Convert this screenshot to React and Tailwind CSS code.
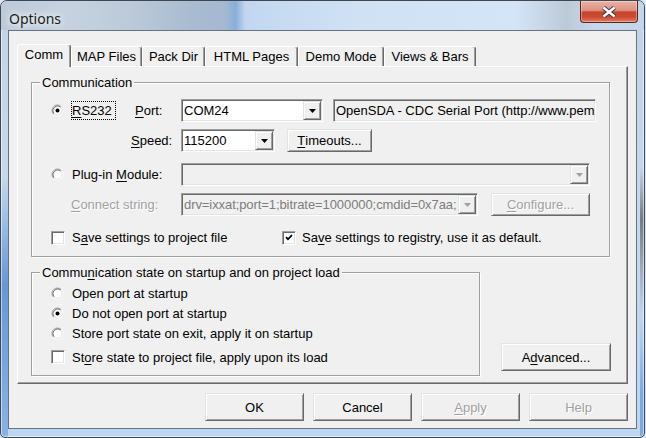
import React from "react";

const raised =
  "border border-t-[#e3e3e3] border-l-[#e3e3e3] border-r-[#696969] border-b-[#696969] shadow-[inset_1px_1px_0_#fff,inset_-1px_-1px_0_#a0a0a0] bg-[#f0f0f0]";
const sunken =
  "border border-t-[#a0a0a0] border-l-[#a0a0a0] border-r-white border-b-white shadow-[inset_1px_1px_0_#696969,inset_-1px_-1px_0_#e3e3e3]";
const grayText = "text-[#a0a0a0] [text-shadow:1px_1px_0_#fff]";

const U = ({ children }) => (
  <span className="underline underline-offset-[2px]">{children}</span>
);

const Button = ({ className, disabled, children }) => (
  <div
    className={`${raised} ${className} flex items-center justify-center ${
      disabled ? grayText : "text-black"
    }`}
  >
    {children}
  </div>
);

const Combo = ({ className, value, disabled }) => (
  <div
    className={`${sunken} ${className} h-[23px] p-[1px] flex ${
      disabled ? "bg-[#f0f0f0]" : "bg-white"
    }`}
  >
    <div
      className={`flex-1 min-w-0 overflow-hidden whitespace-nowrap pl-[1px] flex items-center ${
        disabled ? "text-[#7d7d7d] tracking-[-0.08px]" : "text-black"
      }`}
    >
      {value}
    </div>
    <div className={`${raised} w-[18px] h-full flex items-center justify-center`}>
      <svg width="7" height="4" viewBox="0 0 7 4">
        <path d="M0 0h7L3.5 4z" fill={disabled ? "#a0a0a0" : "#000"} />
      </svg>
    </div>
  </div>
);

const Radio = ({ checked }) => (
  <svg width="13" height="13" viewBox="0 0 13 13" className="shrink-0">
    <circle cx="6.5" cy="6.5" r="5" fill="#fff" />
    <path d="M2.61 10.39A5.5 5.5 0 0 1 10.39 2.61" fill="none" stroke="#a0a0a0" />
    <path d="M3.32 9.68A4.5 4.5 0 0 1 9.68 3.32" fill="none" stroke="#696969" />
    <path d="M10.39 2.61A5.5 5.5 0 0 1 2.61 10.39" fill="none" stroke="#fff" />
    <path d="M9.68 3.32A4.5 4.5 0 0 1 3.32 9.68" fill="none" stroke="#e3e3e3" />
    {checked && <circle cx="6.5" cy="6.5" r="2" fill="#000" />}
  </svg>
);

const Check = ({ checked }) => (
  <div className="w-[14px] h-[14px] shrink-0 bg-white border border-t-[#a0a0a0] border-l-[#a0a0a0] border-r-white border-b-white shadow-[inset_1px_1px_0_#696969,inset_-1px_-1px_0_#e3e3e3] flex items-center justify-center">
    {checked && (
      <svg width="8" height="7" viewBox="0 0 8 7">
        <path d="M1 3.2 L3 5.2 L7 1.2" stroke="#000" strokeWidth="1.7" fill="none" />
      </svg>
    )}
  </div>
);

const Tab = ({ label, className, active }) => (
  <div
    className={`${className} text-center pt-[2px] rounded-t-[3px] border-l border-t border-r border-l-white border-t-white border-r-[#696969] shadow-[inset_-1px_0_0_#a0a0a0] ${
      active ? "relative z-10 h-[23px] -mb-[1px] bg-[#f0f0f0]" : "h-[20px]"
    }`}
  >
    {label}
  </div>
);

const Legend = ({ children }) => (
  <div className="-mt-[8px] ml-[8px] w-fit px-[2px] bg-[#f0f0f0] leading-[15px]">
    {children}
  </div>
);

const group =
  "border border-[#a0a0a0] shadow-[1px_1px_0_#fff,inset_1px_1px_0_#fff]";

export default function App() {
  return (
    <div className="w-[646px] h-[438px] overflow-hidden bg-[#dce7f3] font-['Liberation_Sans',Arial,sans-serif] text-[13px] leading-[15px] text-black">
      <div className="w-[645px] h-[438px] flex flex-col overflow-hidden rounded-t-[7px] rounded-b-[5px] border border-[#3f4852] shadow-[inset_0_0_0_1px_rgba(255,255,255,0.55)] [background:linear-gradient(180deg,rgba(70,130,210,0)_40%,rgba(70,130,210,0.75)_65%,rgba(100,155,220,0.6)_100%)_left_top/7px_100%_no-repeat,linear-gradient(180deg,rgba(60,60,60,0)_38%,rgba(60,60,60,0.6)_50%,rgba(60,60,60,0)_72%,rgba(80,140,215,0.6)_90%)_right_top/4px_100%_no-repeat,linear-gradient(180deg,#c3d3e6_0%,#c7d9ee_50%,#bdd6f2_100%)]">
        {/* title bar */}
        <div className="h-[29px] shrink-0 flex items-start justify-between bg-[linear-gradient(90deg,#bccad9_0%,#c6d2df_10%,#bccad9_20%,#a9bbd0_30%,#a4b8d0_35%,#88aedb_36.5%,#c2d7ef_38%,#d0e1f4_55%,#d4e5f7_80%,#bdc9d7_88%,#c6d7ea_92%,#c4d6ea_100%)]">
          <div className="pl-[8px] pt-[8px] font-['Noto_Sans',sans-serif] text-[14px] leading-[20px] text-[#1b1b1b] [text-shadow:0_0_6px_#fff,0_0_10px_#fff]">
            Options
          </div>
          <div className="mr-[6px] w-[58px] h-[22px] rounded-b-[4px] border border-t-0 border-[#5a241b] bg-[linear-gradient(180deg,#e9b3a5_0%,#dc9180_45%,#c8452c_52%,#c94a31_75%,#e27c5f_100%)] shadow-[inset_0_0_0_1px_rgba(255,255,255,0.35)] flex items-center justify-center">
            <svg width="16" height="12" viewBox="0 0 16 12">
              <path d="M2.5 1.5 L13.5 10.5 M13.5 1.5 L2.5 10.5" stroke="#3c3c3c" strokeWidth="4.4" />
              <path d="M2.5 1.5 L13.5 10.5 M13.5 1.5 L2.5 10.5" stroke="#fff" strokeWidth="2.4" />
            </svg>
          </div>
        </div>

        {/* client area */}
        <div className="mx-[7px] h-[399px] shrink-0 border border-[#66727f] bg-[#f0f0f0] flex flex-col pl-[8px] pt-[13px]">
          <div className="flex items-end h-[22px]">
            <Tab label="Comm" className="w-[54px]" active />
            <Tab label="MAP Files" className="w-[71px]" />
            <Tab label="Pack Dir" className="w-[63px]" />
            <Tab label="HTML Pages" className="w-[93px]" />
            <Tab label="Demo Mode" className="w-[86px]" />
            <Tab label="Views & Bars" className="w-[92px]" />
          </div>

          <div className="w-[611px] h-[318px] bg-[#f0f0f0] border border-t-white border-l-white border-r-[#696969] border-b-[#696969] shadow-[inset_-1px_-1px_0_#a0a0a0]">
            {/* Communication */}
            <div className={`${group} ml-[13px] mt-[15px] w-[579px] h-[175px]`}>
              <Legend>Communication</Legend>

              <div className="flex items-center h-[23px] mt-[9px] pl-[19px]">
                <Radio checked />
                <div className="ml-[7px] w-[45px] h-[19px] border border-dotted border-black flex items-center">
                  <U>R</U>S232
                </div>
                <div className="ml-[19px] w-[46px]">
                  <U>P</U>ort:
                </div>
                <Combo className="w-[142px]" value="COM24" />
                <div className={`${sunken} ml-[10px] w-[263px] h-[23px] p-[1px] bg-[#f0f0f0] flex items-center overflow-hidden`}>
                  <div className="pl-[1px] whitespace-nowrap">
                    OpenSDA - CDC Serial Port (http://www.pemicro.com)
                  </div>
                </div>
              </div>

              <div className="flex items-center h-[23px] mt-[7px] pl-[99px]">
                <div className="w-[50px]">
                  <U>S</U>peed:
                </div>
                <Combo className="w-[94px]" value="115200" />
                <Button className="ml-[12px] w-[85px] h-[23px]">
                  <U>T</U>imeouts...
                </Button>
              </div>

              <div className="flex items-center h-[23px] mt-[11px] pl-[19px]">
                <Radio />
                <div className="ml-[8px] w-[109px]">
                  Plug-in <U>M</U>odule:
                </div>
                <Combo className="w-[409px]" value="" disabled />
              </div>

              <div className="flex items-center h-[23px] mt-[7px] pl-[39px]">
                <div className={`w-[110px] ${grayText}`}>
                  <U>C</U>onnect string:
                </div>
                <Combo
                  className="w-[297px]"
                  value="drv=ixxat;port=1;bitrate=1000000;cmdid=0x7aa;"
                  disabled
                />
                <Button className="ml-[13px] w-[99px] h-[23px]" disabled>
                  <U>C</U>onfigure...
                </Button>
              </div>

              <div className="flex items-center h-[15px] mt-[14px] pl-[19px]">
                <div className="w-[231px] flex items-center">
                  <Check />
                  <div className="ml-[7px]">
                    S<U>a</U>ve settings to project file
                  </div>
                </div>
                <Check checked />
                <div className="ml-[6px]">
                  Sa<U>v</U>e settings to registry, use it as default.
                </div>
              </div>
            </div>

            {/* startup state */}
            <div className="flex items-end ml-[13px] mt-[15px]">
              <div className={`${group} w-[449px] h-[104px]`}>
                <Legend>
                  Commu<U>n</U>ication state on startup and on project load
                </Legend>
                <div className="flex items-center h-[20px] mt-[3px] pl-[19px]">
                  <Radio />
                  <div className="ml-[8px]">Open port at startup</div>
                </div>
                <div className="flex items-center h-[20px] pl-[19px]">
                  <Radio checked />
                  <div className="ml-[8px]">Do not open port at startup</div>
                </div>
                <div className="flex items-center h-[20px] pl-[19px]">
                  <Radio />
                  <div className="ml-[8px]">Store port state on exit, apply it on startup</div>
                </div>
                <div className="flex items-center h-[20px] mt-[4px] pl-[19px]">
                  <Check />
                  <div className="ml-[7px]">
                    St<U>o</U>re state to project file, apply upon its load
                  </div>
                </div>
              </div>
              <Button className="ml-[21px] mb-[5px] w-[110px] h-[28px]">
                A<U>d</U>vanced...
              </Button>
            </div>
          </div>

          <div className="flex justify-end gap-[9px] mt-[9px] w-[611px]">
            <Button className="w-[99px] h-[28px]">OK</Button>
            <Button className="w-[99px] h-[28px]">Cancel</Button>
            <Button className="w-[99px] h-[28px]" disabled>
              <U>A</U>pply
            </Button>
            <Button className="w-[99px] h-[28px]" disabled>
              Help
            </Button>
          </div>
        </div>
      </div>
    </div>
  );
}
